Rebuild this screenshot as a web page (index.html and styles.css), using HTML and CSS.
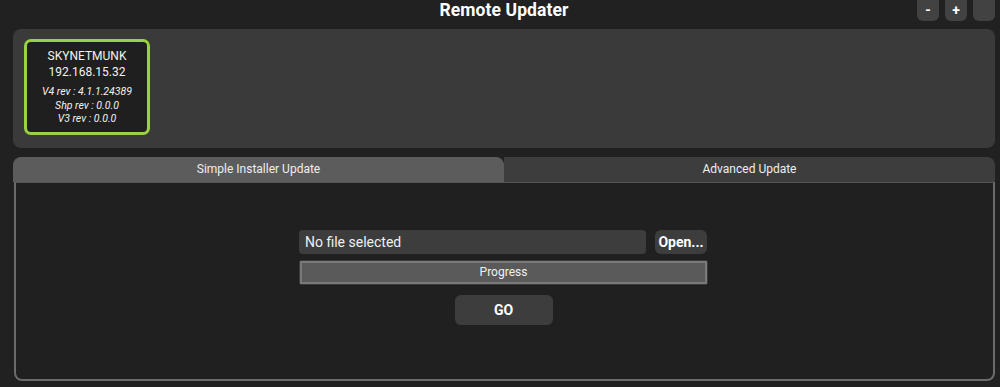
FILE: index.html
```html
<!DOCTYPE html>
<html>
	<head>
		<meta charset="UTF-8">
		<title>Remote Updater</title>
		<link rel="stylesheet" href="styles.css">
	</head>
	<body>
		<!--标题栏-->
		<div class="topBar">
			<div></div>
			<div class="title">Remote Updater</div>
			<div class="winBtns">
				<span>-</span>
				<span>+</span>
				<span></span>
			</div>
		</div>
		<!--设备区-->
		<div class="devices">
			<div class="device">
				<p class="name">SKYNETMUNK</p>
				<p class="ip">192.168.15.32</p>
				<p class="rev">V4 rev : 4.1.1.24389</p>
				<p class="rev">Shp rev : 0.0.0</p>
				<p class="rev">V3 rev : 0.0.0</p>
			</div>
		</div>
		<!--选项卡-->
		<div class="tabs">
			<div class="tabHead">
				<div class="tab active">Simple Installer Update</div>
				<div class="tab">Advanced Update</div>
			</div>
			<div class="tabBody">
				<div class="form">
					<div class="fileRow">
						<div class="fileName">No file selected</div>
						<div class="btn open">Open...</div>
					</div>
					<div class="progress"><span>Progress</span></div>
					<div class="btn go">GO</div>
				</div>
			</div>
		</div>
	</body>
</html>
```
FILE: styles.css
```css
*{
	margin: 0;
	padding: 0;
	box-sizing: border-box;
}
body{
	background: #212121;
	font-family: Roboto, "Liberation Sans", sans-serif;
	color: #eee;
	width: 1000px;
	height: 387px;
	overflow: hidden;
}
.topBar{
	height: 29px;
	display: grid;
	grid-template-columns: 1fr auto 1fr;
	padding: 0 5px 0 13px;
}
.title{
	font-size: 17.5px;
	font-weight: bold;
	line-height: 21px;
	color: #fff;
	letter-spacing: 0.1px;
}
.winBtns{
	display: flex;
	justify-content: flex-end;
	gap: 6px;
}
.winBtns span{
	width: 22px;
	height: 21px;
	background: #424242;
	border-radius: 0 0 6px 6px;
	font-size: 14px;
	font-weight: bold;
	line-height: 20px;
	text-align: center;
	color: #fff;
}
.devices{
	height: 119px;
	margin: 0 5px 0 13px;
	background: #3a3a3a;
	border-radius: 8px;
	padding: 10px 11px;
}
.device{
	width: 126px;
	height: 96px;
	border: 3px solid #9bd144;
	border-radius: 7px;
	background: #1f1f1f;
	text-align: center;
	padding-top: 6px;
}
.device .name,.device .ip{
	font-size: 12px;
	line-height: 16px;
	color: #f2f2f2;
}
.device .ip{
	margin-bottom: 5px;
}
.device .rev{
	font-size: 10.5px;
	font-style: italic;
	line-height: 13.5px;
	color: #f2f2f2;
}
.tabs{
	margin: 9px 5px 0 13px;
}
.tabHead{
	display: flex;
	height: 25px;
}
.tab{
	flex: 1;
	font-size: 12px;
	line-height: 25px;
	text-align: center;
	background: #3d3d3d;
	border-radius: 0 8px 0 0;
}
.tab.active{
	background: #5c5c5c;
	border-radius: 8px 8px 0 0;
}
.tabBody{
	height: 199px;
	margin-left: 1px;
	border: 2px solid #6b6b6b;
	border-top: 1px solid #555;
	border-radius: 0 0 8px 8px;
	background: #202020;
	padding-top: 47px;
}
.form{
	width: 409px;
	margin: 0 auto;
	position: relative;
	left: -1px;
	display: flex;
	flex-direction: column;
	align-items: center;
}
.fileRow{
	display: flex;
	gap: 9px;
	width: 100%;
}
.fileName{
	width: 347px;
	height: 24px;
	background: #3d3d3d;
	border-radius: 4px;
	font-size: 14px;
	line-height: 24px;
	padding-left: 6px;
	color: #f0f0f0;
}
.btn{
	background: #3d3d3d;
	border-radius: 6px;
	font-weight: bold;
	font-size: 14px;
	text-align: center;
	color: #fff;
}
.open{
	width: 52px;
	height: 24px;
	line-height: 24px;
}
.progress{
	margin-top: 6px;
	width: 100%;
	height: 25px;
	background: #3a3a3a;
	border-radius: 3px;
	padding: 1px;
}
.progress span{
	display: block;
	height: 100%;
	border: 2px solid #7a7a7a;
	background: #5a5a5a;
	font-size: 12px;
	line-height: 19px;
	text-align: center;
	color: #f0f0f0;
}
.go{
	margin-top: 10px;
	width: 98px;
	height: 30px;
	line-height: 30px;
}
```
